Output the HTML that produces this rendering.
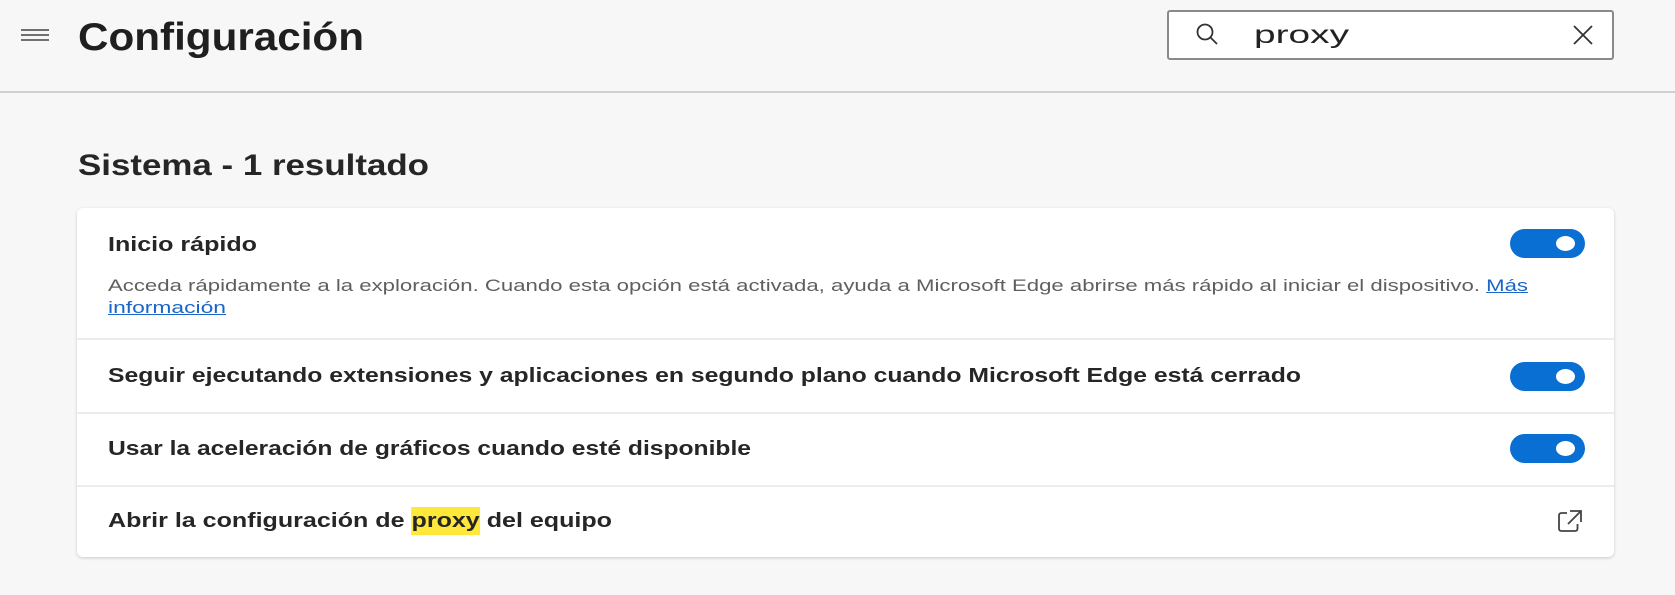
<!DOCTYPE html>
<html><head><meta charset="utf-8"><style>
html,body{margin:0;padding:0;width:1675px;height:595px;overflow:hidden;background:#f7f7f7;font-family:"Liberation Sans",sans-serif;color:#1b1b1b}
.a{position:absolute;white-space:nowrap;transform-origin:0 50%;line-height:1}
.hdr{position:absolute;left:0;top:91px;width:1675px;height:2px;background:#cfcfcf}
.card{position:absolute;left:77px;top:208px;width:1537px;height:349px;background:#fff;border-radius:6px;box-shadow:0 1px 3px rgba(0,0,0,.18)}
.sep{position:absolute;left:77px;width:1537px;height:2px;background:#ececec}
.tg{position:absolute;left:1510px;width:75px;height:29px;border-radius:15px;background:#0a6fd2}
.tg:after{content:"";position:absolute;right:10px;top:7px;width:19px;height:15px;border-radius:50%;background:#fff}
.b{font-weight:bold;font-size:20px;color:#262626}
.d{font-size:17px;color:#5f5f5f}
</style></head><body>
<svg style="position:absolute;left:20px;top:28px" width="30" height="14"><g stroke="#444" stroke-width="1.6"><line x1="1" y1="2" x2="29" y2="2"/><line x1="1" y1="7" x2="29" y2="7"/><line x1="1" y1="12" x2="29" y2="12"/></g></svg>
<div class="a" id="t1" style="left:78px;top:18px;font-size:39px;font-weight:bold;color:#1f1f1f">Configuración</div>
<div style="position:absolute;left:1167px;top:10px;width:443px;height:46px;border:2px solid #8a8a8a;border-radius:3px;background:#fff"></div>
<svg style="position:absolute;left:1195px;top:22px" width="26" height="26" viewBox="0 0 26 26"><circle cx="10" cy="10" r="7.5" fill="none" stroke="#333" stroke-width="1.8"/><line x1="15.5" y1="15.5" x2="22" y2="22" stroke="#333" stroke-width="1.8"/></svg>
<div class="a" id="t2" style="left:1254px;top:23px;font-size:25px;color:#222">proxy</div>
<svg style="position:absolute;left:1572px;top:24px" width="22" height="22"><g stroke="#333" stroke-width="1.8"><line x1="2" y1="2" x2="20" y2="20"/><line x1="20" y1="2" x2="2" y2="20"/></g></svg>
<div class="hdr"></div>
<div class="a" id="t3" style="left:78px;top:151px;font-size:30px;font-weight:bold;color:#262626">Sistema - 1 resultado</div>
<div class="card"></div>
<div class="sep" style="top:338px"></div>
<div class="sep" style="top:412px"></div>
<div class="sep" style="top:485px"></div>
<div class="a b" id="t4" style="left:108px;top:235px">Inicio rápido</div>
<div class="tg" style="top:229px"></div>
<div class="a d" id="t5" style="left:108px;top:277px">Acceda rápidamente a la exploración. Cuando esta opción está activada, ayuda a Microsoft Edge abrirse más rápido al iniciar el dispositivo. <span style="color:#1a66c8;text-decoration:underline">Más</span></div>
<div class="a d" id="t6" style="left:108px;top:299px;color:#1a66c8;text-decoration:underline">información</div>
<div class="a b" id="t7" style="left:108px;top:366px">Seguir ejecutando extensiones y aplicaciones en segundo plano cuando Microsoft Edge está cerrado</div>
<div class="tg" style="top:362px"></div>
<div class="a b" id="t8" style="left:108px;top:439px">Usar la aceleración de gráficos cuando esté disponible</div>
<div class="tg" style="top:434px"></div>
<div class="a b" id="t9" style="left:108px;top:511px">Abrir la configuración de <span style="background:#ffe83a;padding:3px 0">proxy</span> del equipo</div>
<svg style="position:absolute;left:1557px;top:509px" width="26" height="24" viewBox="0 0 26 24"><path d="M10 4H4.5Q2 4 2 6.5V19.5Q2 22 4.5 22H18Q20.5 22 20.5 19.5V15" fill="none" stroke="#444" stroke-width="1.8"/><path d="M13 2H24V13M24 2L11 15" fill="none" stroke="#444" stroke-width="1.8"/></svg>
<script>
var T={t1:[78,364],t2:[1254,1349],t3:[78,429],t4:[108,257],t5:[108,1528],t6:[108,226],t7:[108,1301],t8:[108,751],t9:[108,612]};
for(var k in T){var e=document.getElementById(k);var w=e.getBoundingClientRect().width;e.style.transform="scaleX("+((T[k][1]-T[k][0])/w)+")";}
</script>
</body></html>
